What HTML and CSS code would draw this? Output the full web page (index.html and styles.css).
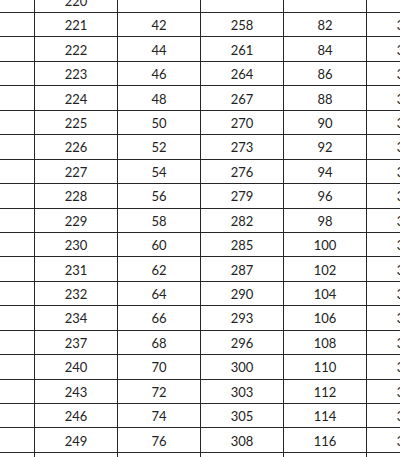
FILE: index.html
```html
<!DOCTYPE html>
<html lang="zh">
<head>
<meta charset="utf-8">
<link rel="stylesheet" href="styles.css">
</head>
<body>
<div class="sheet">
  <div class="cell"></div><div class="cell">220</div><div class="cell"></div><div class="cell"></div><div class="cell"></div><div class="cell"></div>
  <div class="cell"></div><div class="cell">221</div><div class="cell">42</div><div class="cell">258</div><div class="cell">82</div><div class="cell">312</div>
  <div class="cell"></div><div class="cell">222</div><div class="cell">44</div><div class="cell">261</div><div class="cell">84</div><div class="cell">315</div>
  <div class="cell"></div><div class="cell">223</div><div class="cell">46</div><div class="cell">264</div><div class="cell">86</div><div class="cell">318</div>
  <div class="cell"></div><div class="cell">224</div><div class="cell">48</div><div class="cell">267</div><div class="cell">88</div><div class="cell">321</div>
  <div class="cell"></div><div class="cell">225</div><div class="cell">50</div><div class="cell">270</div><div class="cell">90</div><div class="cell">324</div>
  <div class="cell"></div><div class="cell">226</div><div class="cell">52</div><div class="cell">273</div><div class="cell">92</div><div class="cell">327</div>
  <div class="cell"></div><div class="cell">227</div><div class="cell">54</div><div class="cell">276</div><div class="cell">94</div><div class="cell">330</div>
  <div class="cell"></div><div class="cell">228</div><div class="cell">56</div><div class="cell">279</div><div class="cell">96</div><div class="cell">333</div>
  <div class="cell"></div><div class="cell">229</div><div class="cell">58</div><div class="cell">282</div><div class="cell">98</div><div class="cell">336</div>
  <div class="cell"></div><div class="cell">230</div><div class="cell">60</div><div class="cell">285</div><div class="cell">100</div><div class="cell">339</div>
  <div class="cell"></div><div class="cell">231</div><div class="cell">62</div><div class="cell">287</div><div class="cell">102</div><div class="cell">342</div>
  <div class="cell"></div><div class="cell">232</div><div class="cell">64</div><div class="cell">290</div><div class="cell">104</div><div class="cell">345</div>
  <div class="cell"></div><div class="cell">234</div><div class="cell">66</div><div class="cell">293</div><div class="cell">106</div><div class="cell">348</div>
  <div class="cell"></div><div class="cell">237</div><div class="cell">68</div><div class="cell">296</div><div class="cell">108</div><div class="cell">351</div>
  <div class="cell"></div><div class="cell">240</div><div class="cell">70</div><div class="cell">300</div><div class="cell">110</div><div class="cell">354</div>
  <div class="cell"></div><div class="cell">243</div><div class="cell">72</div><div class="cell">303</div><div class="cell">112</div><div class="cell">357</div>
  <div class="cell"></div><div class="cell">246</div><div class="cell">74</div><div class="cell">305</div><div class="cell">114</div><div class="cell">360</div>
  <div class="cell"></div><div class="cell">249</div><div class="cell">76</div><div class="cell">308</div><div class="cell">116</div><div class="cell">363</div>
  <div class="cell"></div><div class="cell">252</div><div class="cell">78</div><div class="cell">311</div><div class="cell">118</div><div class="cell">366</div>
</div>
</body>
</html>
```

FILE: styles.css
```css
html, body {
  margin: 0;
  padding: 0;
  background: #ffffff;
  overflow: hidden;
}

body {
  width: 400px;
  height: 457px;
}

.sheet {
  display: grid;
  grid-template-columns: repeat(6, 83px);
  grid-auto-rows: 24.44px;
  margin-left: -48px;
  margin-top: -11.44px;
  font-family: Lato, "Liberation Sans", sans-serif;
  font-size: 13px;
  color: #222222;
}

.cell {
  box-sizing: border-box;
  border-right: 1px solid #262626;
  border-bottom: 1px solid #262626;
  display: flex;
  align-items: center;
  justify-content: center;
  padding-top: 1px;
  white-space: nowrap;
}
```
